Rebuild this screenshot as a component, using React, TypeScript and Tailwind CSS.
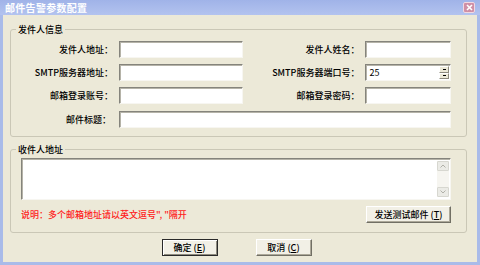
import React from "react";

const font = { fontFamily: '"Noto Sans CJK SC", "Liberation Sans", sans-serif' };

function Input({ w, children }: { w: string; children?: React.ReactNode }) {
  return (
    <div
      className={`${w} h-[17px] bg-white border border-t-[#85847c] border-l-[#85847c] border-b-[#f7f6f1] border-r-[#f7f6f1] shadow-[inset_1px_1px_0_#b5b3a8] relative flex items-center`}
    >
      {children}
    </div>
  );
}

function Label({ w, children }: { w: string; children: React.ReactNode }) {
  return (
    <div className={`${w} shrink-0 text-right text-[9px] leading-none text-black font-medium pr-[1px]`}>
      {children}
    </div>
  );
}

function Btn({ children, def, w }: { children: React.ReactNode; def?: boolean; w: string }) {
  return (
    <div
      className={`${w} h-[17px] flex items-center justify-center text-[9px] leading-none text-black font-medium bg-[#f2f0e6] ${
        def
          ? "border border-[#2a2a2a] shadow-[inset_1px_1px_0_#ffffff,inset_-1px_-1px_0_#8d8a7d]"
          : "border border-t-white border-l-white border-b-[#716f64] border-r-[#716f64] shadow-[inset_-1px_-1px_0_#aca899]"
      }`}
    >
      {children}
    </div>
  );
}

export default function App() {
  return (
    <div style={font} className="w-[480px] h-[265px] flex flex-col bg-[#a9bbe9] overflow-hidden">
      {/* Title bar */}
      <div className="h-[15px] shrink-0 flex items-center justify-between pl-[5px] pr-[5px] bg-gradient-to-b from-[#a0b3e8] to-[#b3c3ef]">
        <span className="text-[10px] font-bold text-white leading-none tracking-[0.3px]">邮件告警参数配置</span>
        <div className="w-[12px] h-[11px] rounded-[2px] bg-[#cf8fa6] border border-[#f1d8e2] flex items-center justify-center">
          <svg width="7" height="7" viewBox="0 0 7 7">
            <path d="M1 1 L6 6 M6 1 L1 6" stroke="#ffffff" strokeWidth="1.6" />
          </svg>
        </div>
      </div>

      {/* Body */}
      <div className="flex-1 mx-[3px] mb-[3px] bg-[#ece9d8] flex flex-col pl-[7px] pr-[10px]">
        {/* Group 1 */}
        <div className="relative mt-[14px] border border-[#cac7b6] rounded-[3px] pt-[11px] pb-[8px] pl-[0px] pr-[15px] flex flex-col gap-[6px]">
          <div className="absolute -top-[6px] left-[5px] px-[2px] bg-[#ece9d8] text-[9px] leading-[11px] text-black font-medium">
            发件人信息
          </div>
          <div className="flex items-center">
            <Label w="w-[103px]">发件人地址：</Label>
            <div className="w-[5px]" />
            <Input w="w-[125px]" />
            <Label w="w-[117px]">发件人姓名：</Label>
            <div className="w-[5px]" />
            <Input w="w-[86px]" />
          </div>
          <div className="flex items-center">
            <Label w="w-[103px]">SMTP服务器地址：</Label>
            <div className="w-[5px]" />
            <Input w="w-[125px]" />
            <Label w="w-[117px]">SMTP服务器端口号：</Label>
            <div className="w-[5px]" />
            <Input w="w-[86px]">
              <span className="pl-[3px] text-[9px] leading-none text-black">25</span>
              <div className="absolute right-[1px] top-[1px] bottom-[1px] w-[10px] flex flex-col">
                <div className="flex-1 bg-[#ece9d8] border border-t-white border-l-white border-b-[#8d8a7d] border-r-[#8d8a7d] flex items-center justify-center">
                  <div className="w-[3px] h-[1px] bg-black" />
                </div>
                <div className="flex-1 bg-[#ece9d8] border border-t-white border-l-white border-b-[#8d8a7d] border-r-[#8d8a7d] flex items-center justify-center">
                  <div className="w-[3px] h-[1px] bg-black" />
                </div>
              </div>
            </Input>
          </div>
          <div className="flex items-center">
            <Label w="w-[103px]">邮箱登录账号：</Label>
            <div className="w-[5px]" />
            <Input w="w-[125px]" />
            <Label w="w-[117px]">邮箱登录密码：</Label>
            <div className="w-[5px]" />
            <Input w="w-[86px]" />
          </div>
          <div className="flex items-center mt-[1px]">
            <Label w="w-[101px]">邮件标题：</Label>
            <div className="w-[7px]" />
            <Input w="flex-1" />
          </div>
        </div>

        {/* Group 2 */}
        <div className="relative mt-[12px] border border-[#cac7b6] rounded-[3px] pt-[8px] pb-[9px] pl-[10px] pr-[15px] flex flex-col">
          <div className="absolute -top-[6px] left-[5px] px-[2px] bg-[#ece9d8] text-[9px] leading-[11px] text-black font-medium">
            收件人地址
          </div>
          <div className="h-[42px] bg-white border border-t-[#85847c] border-l-[#85847c] border-b-[#f7f6f1] border-r-[#f7f6f1] shadow-[inset_1px_1px_0_#b5b3a8] flex justify-end">
            <div className="w-[12px] mr-[1px] my-[2px] bg-[#f6f5f0] flex flex-col justify-between">
              <div className="h-[10px] bg-[#ebebe6] border border-[#d7d7d0] rounded-[1px] flex items-center justify-center">
                <svg width="6" height="4" viewBox="0 0 6 4">
                  <path d="M0.5 3.5 L3 1 L5.5 3.5" stroke="#b0b0a8" strokeWidth="1" fill="none" />
                </svg>
              </div>
              <div className="h-[10px] bg-[#ebebe6] border border-[#d7d7d0] rounded-[1px] flex items-center justify-center">
                <svg width="6" height="4" viewBox="0 0 6 4">
                  <path d="M0.5 0.5 L3 3 L5.5 0.5" stroke="#b0b0a8" strokeWidth="1" fill="none" />
                </svg>
              </div>
            </div>
          </div>
          <div className="mt-[6px] flex items-center justify-between">
            <span className="text-[9px] leading-none text-[#ff2020] font-medium">说明：多个邮箱地址请以英文逗号", "隔开</span>
            <Btn w="w-[85px]">
              发送测试邮件 (<u>T</u>)
            </Btn>
          </div>
        </div>

        {/* Bottom buttons */}
        <div className="mt-[6px] flex justify-center gap-[38px] pr-[4px]">
          <Btn w="w-[56px]" def>
            确定 (<u>E</u>)
          </Btn>
          <Btn w="w-[56px]">
            取消 (<u>C</u>)
          </Btn>
        </div>
      </div>
    </div>
  );
}
